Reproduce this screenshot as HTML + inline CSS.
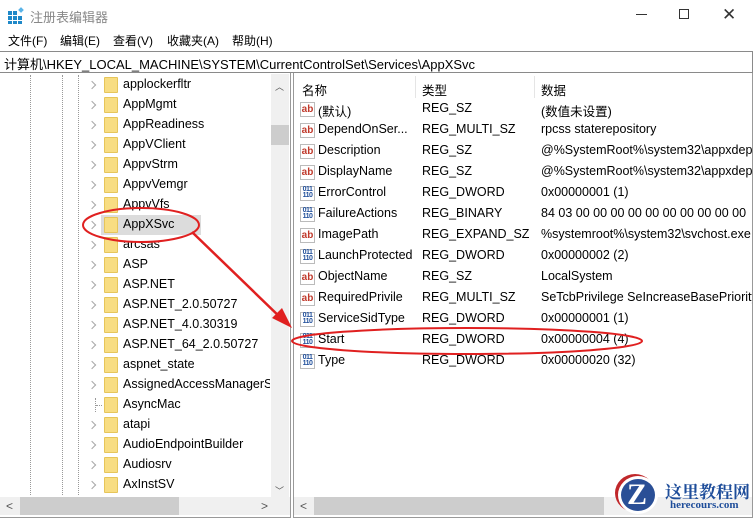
<!DOCTYPE html>
<html><head><meta charset="utf-8"><style>
*{margin:0;padding:0;box-sizing:border-box}
body{width:754px;height:518px;overflow:hidden;background:#fff;font-family:"Liberation Sans","Noto Sans CJK SC",sans-serif;font-size:12.5px;color:#000;position:relative}
.a{position:absolute;white-space:nowrap}
.menu span{position:absolute;top:0}
.fold{position:absolute;width:14px;height:16px;background:#f8dd82;border:1px solid #e6c55a;border-radius:1px}
.chev{position:absolute;width:6px;height:6px;border-right:1.3px solid #a8a8a8;border-top:1.3px solid #a8a8a8;transform:rotate(45deg)}
.dl{position:absolute;width:0;border-left:1px dotted #999}
.ico{position:absolute;width:15px;height:15px;font-size:10px;font-weight:bold;line-height:13px;text-align:center;border:1px solid #bbb;background:#fff}
.ab{color:#c0392b}
.bin{color:#1f4e9a;font-size:7px;line-height:6px;letter-spacing:-.5px}
</style></head><body>
<div class="a" style="left:8px;top:8px;width:16px;height:16px">
<div style="position:absolute;left:0;top:3px;width:4px;height:4px;background:#1e88c8"></div><div style="position:absolute;left:5px;top:3px;width:4px;height:4px;background:#1e88c8"></div>
<div style="position:absolute;left:0;top:8px;width:4px;height:4px;background:#1e88c8"></div><div style="position:absolute;left:5px;top:8px;width:4px;height:4px;background:#1e88c8"></div>
<div style="position:absolute;left:10px;top:8px;width:4px;height:4px;background:#1e88c8"></div><div style="position:absolute;left:0;top:13px;width:4px;height:3px;background:#1e88c8"></div>
<div style="position:absolute;left:5px;top:13px;width:4px;height:3px;background:#1e88c8"></div><div style="position:absolute;left:10px;top:13px;width:4px;height:3px;background:#1e88c8"></div>
<div style="position:absolute;left:11px;top:0;width:4px;height:4px;background:#5ab4e8;transform:rotate(45deg)"></div></div>
<div class="a" style="left:30px;top:7px;color:#888;font-size:13px">注册表编辑器</div>
<div class="a" style="left:636px;top:14px;width:11px;height:1px;background:#333"></div>
<div class="a" style="left:679px;top:9px;width:10px;height:10px;border:1px solid #333"></div>
<div class="a" style="left:722px;top:5px;font-size:17px;color:#333;font-weight:300">✕</div>
<div class="a menu" style="left:0;top:32px;font-size:12px"><span style="left:8px">文件(F)</span><span style="left:60px">编辑(E)</span><span style="left:113px">查看(V)</span><span style="left:167px">收藏夹(A)</span><span style="left:232px">帮助(H)</span></div>
<div class="a" style="left:0;top:51px;width:753px;height:22px;border:1px solid #8a8a8a;border-left:none;background:#fff"></div>
<div class="a" style="left:4px;top:54px;font-size:13px">计算机\HKEY_LOCAL_MACHINE\SYSTEM\CurrentControlSet\Services\AppXSvc</div>
<div class="a" style="left:0;top:73px;width:291px;height:445px;border-right:1px solid #999;border-bottom:1px solid #999"></div>
<div class="dl" style="left:30px;top:75px;height:420px"></div>
<div class="dl" style="left:62px;top:75px;height:420px"></div>
<div class="dl" style="left:78px;top:75px;height:420px"></div>
<div class="dl" style="left:95px;top:398px;height:14px"></div>
<div class="a" style="left:96px;top:405px;width:6px;border-top:1px dotted #999"></div>
<div class="a" style="left:101px;top:215px;width:100px;height:20px;background:#dcdcdc"></div>
<div id="tree"></div>
<div class="a" style="left:271px;top:74px;width:18px;height:423px;background:#f0f0f0"></div>
<div class="a" style="left:271px;top:125px;width:18px;height:20px;background:#cdcdcd"></div>
<div class="a" style="left:275px;top:80px;font-size:9px;color:#555">︿</div>
<div class="a" style="left:275px;top:484px;font-size:9px;color:#555">﹀</div>
<div class="a" style="left:0;top:497px;width:290px;height:18px;background:#f0f0f0"></div>
<div class="a" style="left:20px;top:497px;width:159px;height:18px;background:#cdcdcd"></div>
<div class="a" style="left:6px;top:499px;font-size:12px;color:#555">&lt;</div>
<div class="a" style="left:261px;top:499px;font-size:12px;color:#555">&gt;</div>
<div class="a" style="left:293px;top:73px;width:460px;height:445px;border-left:1px solid #999;border-right:1px solid #999;border-bottom:1px solid #999"></div>
<div class="a" style="left:302px;top:80px">名称</div>
<div class="a" style="left:422px;top:80px">类型</div>
<div class="a" style="left:541px;top:80px">数据</div>
<div class="a" style="left:415px;top:76px;height:22px;border-left:1px solid #e5e5e5"></div>
<div class="a" style="left:534px;top:76px;height:22px;border-left:1px solid #e5e5e5"></div>
<div id="rows"></div>
<div class="a" style="left:294px;top:497px;width:458px;height:18px;background:#f0f0f0"></div>
<div class="a" style="left:300px;top:499px;font-size:12px;color:#555">&lt;</div>
<div class="a" style="left:314px;top:497px;width:290px;height:18px;background:#cdcdcd"></div>
<svg class="a" style="left:0;top:0" width="754" height="518">
<ellipse cx="141" cy="225" rx="58" ry="17" fill="none" stroke="#e02020" stroke-width="2"/>
<ellipse cx="467" cy="341" rx="175" ry="13" fill="none" stroke="#e02020" stroke-width="2"/>
<line x1="192" y1="232" x2="283" y2="320" stroke="#e02020" stroke-width="2.5"/>
<polygon points="292,328 272,318 282,308" fill="#e02020"/>
</svg>
<div class="a" style="left:618px;top:476px;width:40px;height:38px;border-radius:50%;background:#2a4f96;border:3px solid #fff;box-shadow:-3px -2px 0 #c0282b"></div>
<div class="a" style="left:627px;top:478px;font-size:30px;font-weight:bold;color:#fff;font-family:'Liberation Serif',serif">Z</div>
<div class="a" style="left:665px;top:478px;font-size:17px;font-weight:bold;color:#1e4d9a;font-family:'Liberation Serif','Noto Serif CJK SC',serif">这里教程网</div>
<div class="a" style="left:670px;top:499px;font-size:11px;font-weight:bold;color:#1e4d9a;font-family:'Liberation Serif',serif">herecours.com</div>
<script>
var t=["applockerfltr","AppMgmt","AppReadiness","AppVClient","AppvStrm","AppvVemgr","AppvVfs","AppXSvc","arcsas","ASP","ASP.NET","ASP.NET_2.0.50727","ASP.NET_4.0.30319","ASP.NET_64_2.0.50727","aspnet_state","AssignedAccessManagerS","AsyncMac","atapi","AudioEndpointBuilder","Audiosrv","AxInstSV"];
var h="";t.forEach(function(n,i){var y=75+i*20;
if(n!="AsyncMac")h+='<div class="chev" style="left:89px;top:'+(y+7)+'px"></div>';
h+='<div class="fold" style="left:104px;top:'+(y+2)+'px"></div><div class="a" style="left:123px;top:'+(y+2)+'px;width:147px;overflow:hidden">'+n+'</div>';});
document.getElementById("tree").innerHTML=h;
var r=[["ab","(默认)","REG_SZ","(数值未设置)"],["ab","DependOnSer...","REG_MULTI_SZ","rpcss staterepository"],["ab","Description","REG_SZ","@%SystemRoot%\\system32\\appxdeploymentserver.dll"],["ab","DisplayName","REG_SZ","@%SystemRoot%\\system32\\appxdeploymentserver.dll"],["b","ErrorControl","REG_DWORD","0x00000001 (1)"],["b","FailureActions","REG_BINARY","84 03 00 00 00 00 00 00 00 00 00 00"],["ab","ImagePath","REG_EXPAND_SZ","%systemroot%\\system32\\svchost.exe -k"],["b","LaunchProtected","REG_DWORD","0x00000002 (2)"],["ab","ObjectName","REG_SZ","LocalSystem"],["ab","RequiredPrivile","REG_MULTI_SZ","SeTcbPrivilege SeIncreaseBasePriorityPrivilege"],["b","ServiceSidType","REG_DWORD","0x00000001 (1)"],["b","Start","REG_DWORD","0x00000004 (4)"],["b","Type","REG_DWORD","0x00000020 (32)"]];
h="";r.forEach(function(e,i){var y=101+i*21;
h+=e[0]=="ab"?'<div class="ico ab" style="left:300px;top:'+(y+1)+'px">ab</div>':'<div class="ico bin" style="left:300px;top:'+(y+1)+'px">011<br>110</div>';
h+='<div class="a" style="left:318px;top:'+y+'px">'+e[1]+'</div><div class="a" style="left:422px;top:'+y+'px">'+e[2]+'</div><div class="a" style="left:541px;top:'+y+'px;width:211px;overflow:hidden">'+e[3]+'</div>';});
document.getElementById("rows").innerHTML=h;
</script>
</body></html>
